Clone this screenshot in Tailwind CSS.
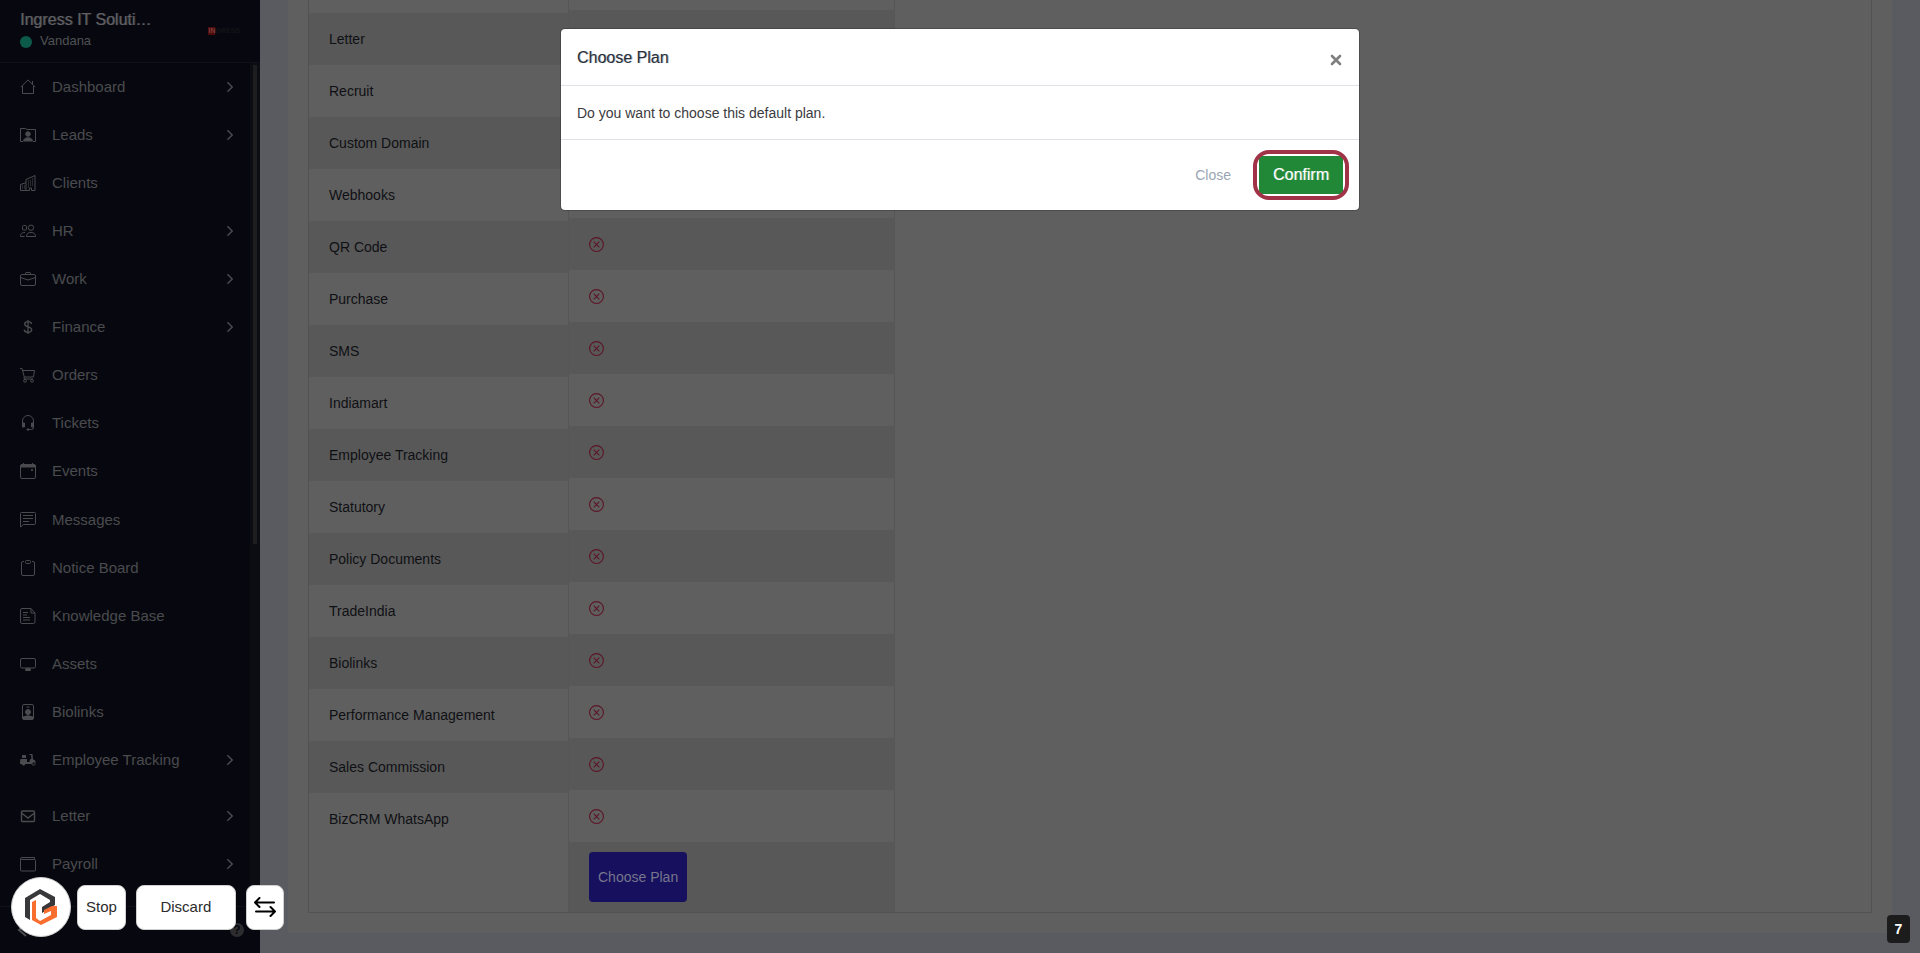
<!doctype html>
<html lang="en">
<head>
  <meta charset="UTF-8">
  <meta name="viewport" content="width=device-width, initial-scale=1.0">
  <title>Choose Plan</title>
  <script src="https://cdn.jsdelivr.net/npm/@tailwindcss/browser@4"></script>
</head>
<body class="relative flex h-screen overflow-hidden bg-[#5a5b60] font-['Liberation_Sans',Arial,sans-serif] text-sm text-[#0f1014]">

  <!-- Shared icons -->
  <svg class="hidden">
    <symbol id="chevron" viewBox="0 0 16 16"><path d="M5 2.5 10.5 8 5 13.5" fill="none" stroke="currentColor" stroke-width="1.7"/></symbol>
    <symbol id="x-circle" viewBox="0 0 16 16"><g fill="none" stroke="currentColor" stroke-width="1.2"><circle cx="8" cy="8" r="7.4"/><path d="m5 5 6 6M11 5l-6 6"/></g></symbol>
  </svg>

  <!-- Sidebar -->
  <aside class="flex w-[260px] shrink-0 flex-col bg-[#07080f] text-[#4a4b4e]">
    <header class="flex h-[63px] shrink-0 items-center justify-between border-b border-[#101118] pl-5 pr-5">
      <div class="pt-px">
        <h1 class="text-base/5 text-[#606063] [text-shadow:1px_0_0_#60606380]">Ingress IT Soluti…</h1>
        <p class="flex h-6 items-center gap-2 text-[13px] text-[#505154]"><span class="size-3 rounded-full bg-[#0c5b4a]"></span>Vandana</p>
      </div>
      <div class="flex text-[7px]/[8px] font-bold text-[#131217]"><span class="bg-[#4f0c0c] text-[#7d3a38]">IN</span>GRESS</div>
    </header>

    <div class="flex min-h-0 flex-1">
      <nav class="flex-1 overflow-hidden text-[15px] [&>a]:flex [&>a]:h-12 [&>a]:items-center [&>a]:gap-4 [&>a]:pl-5 [&>a]:pr-[13px] [&>a>span]:flex-1 [&_svg]:size-4 [&_svg]:shrink-0 [&_svg:last-child:not(:first-child)]:size-[14px]">
        <a href="#"><svg viewBox="0 0 16 16" fill="none" stroke="currentColor"><path d="M2.500 7v7.500h11V7M.8 8 8 .9 15.200 8M12.500 2v3"/></svg><span>Dashboard</span><svg><use href="#chevron"/></svg></a>
        <a href="#"><svg viewBox="0 0 16 16" fill="none" stroke="currentColor"><path d="M3 14.500H.5v-13h5l1.500 1h8.500v12H13"/><circle cx="8" cy="7" r="2.300" fill="currentColor"/><path d="M3.500 14c.5-2.500 2-3.200 4.500-3.200s4 .7 4.500 3.200z" fill="currentColor"/></svg><span>Leads</span><svg><use href="#chevron"/></svg></a>
        <a href="#"><svg viewBox="0 0 16 16" fill="none" stroke="currentColor"><path d="M.5 15.500v-6L6 7.700V4.500l9-4v15h-3.500V13h-2v2.500zM6 7.700v7.800"/><path d="M2 11h1m1 0h1m-3 2h1m1 0h1m3-7h1m1 0h1m1 0h1M8 8h1m1 0h1m1 0h1m-5 2h1m1 0h1m1 0h1m-5 2h1m3-8h1"/></svg><span>Clients</span></a>
        <a href="#"><svg viewBox="0 0 16 16" fill="none" stroke="currentColor"><rect x="2.500" y="2.500" width="4" height="4.500" rx="1"/><circle cx="11" cy="4.700" r="2.700"/><path d="M6.500 13.500c0-3 1.800-4 4.500-4s4.500 1 4.500 4zM4.500 13.500h-4c0-2.700 1-4 4.500-4"/></svg><span>HR</span><svg><use href="#chevron"/></svg></a>
        <a href="#"><svg viewBox="0 0 16 16" fill="none" stroke="currentColor"><rect x=".5" y="3.500" width="15" height="11" rx="1.500"/><path d="M5.500 3.500V2.200q0-.7.7-.7h3.600q.7 0 .7.7v1.300M.5 6.500 8 9l7.500-2.500"/></svg><span>Work</span><svg><use href="#chevron"/></svg></a>
        <a href="#"><svg viewBox="0 0 16 16" fill="none" stroke="currentColor" stroke-width="1.300"><path d="M11.500 5C11.300 3.500 10 2.700 8 2.700S4.700 3.600 4.700 5.200C4.700 8.700 11.700 6.800 11.700 10.600c0 1.700-1.500 2.700-3.700 2.700s-3.600-1-3.800-2.600M8 1v14"/></svg><span>Finance</span><svg><use href="#chevron"/></svg></a>
        <a href="#"><svg viewBox="0 0 16 16" fill="none" stroke="currentColor"><path d="M0 1.500h2l2.300 8.500H13.500M2.700 3.500h11.800l-1 6.500M4.300 10l-.3 2h9"/><circle cx="5" cy="13.800" r="1.400"/><circle cx="12" cy="13.800" r="1.400"/></svg><span>Orders</span></a>
        <a href="#"><svg viewBox="0 0 16 16" fill="none" stroke="currentColor"><path d="M2.500 8V6a5.500 5.500 0 0 1 11 0v6.500q0 2-2 2H9"/><path d="M2.500 8h2v4h-2zM11.500 8h2v4h-2zM7 14h2v1H7z" fill="currentColor"/></svg><span>Tickets</span></a>
        <a href="#"><svg viewBox="0 0 16 16" fill="none" stroke="currentColor"><rect x=".5" y="1.500" width="15" height="14" rx="1.500"/><path d="M1 2h14v2H1z" fill="currentColor"/><path d="M3.500 0v2M12.500 0v2"/><path d="M11.500 6.500h1v1h-1z" fill="currentColor"/></svg><span>Events</span></a>
        <a href="#" class="mt-px"><svg viewBox="0 0 16 16" fill="none" stroke="currentColor"><path d="M.5 15V1.500q0-1 1-1h13q1 0 1 1v10q0 1-1 1H3.500zM3 3.500h10M3 6.500h10M3 9.500h6"/></svg><span>Messages</span></a>
        <a href="#"><svg viewBox="0 0 16 16" fill="none" stroke="currentColor"><path d="M4 1.500H3q-1.500 0-1.500 1.500v11q0 1.500 1.500 1.500h10q1.500 0 1.500-1.500V3q0-1.500-1.500-1.500h-1"/><rect x="5.500" y=".5" width="5" height="3" rx="1"/></svg><span>Notice Board</span></a>
        <a href="#"><svg viewBox="0 0 16 16" fill="none" stroke="currentColor"><path d="M11 .5H2Q.5.500.5 2v12q0 1.500 1.500 1.500h11.500q1.500 0 1.500-1.500V5zM11 .5v4.500h4M3 4.500h5M3 7h4M3 9.500h7M3 12h7"/></svg><span>Knowledge Base</span></a>
        <a href="#"><svg viewBox="0 0 16 16" fill="none" stroke="currentColor"><rect x=".5" y="2.500" width="15" height="9.500" rx="1.500"/><path d="M6 12.500h4l.5 2h-5z" fill="currentColor"/></svg><span>Assets</span></a>
        <a href="#"><svg viewBox="0 0 16 16" fill="none" stroke="currentColor"><rect x="2.500" y=".5" width="11" height="15" rx="1.500"/><path d="M6.500 3h3"/><circle cx="8" cy="8" r="2.500" fill="currentColor"/><path d="M3 15v-2q5-2.500 10 0v2z" fill="currentColor"/></svg><span>Biolinks</span></a>
        <a href="#"><svg viewBox="0 0 16 16" fill="currentColor"><path d="M2 3h4v3H2zM.5 7h6.500v3h2.500c0-2 .7-3 2-3.500L11 3H9.500V2h3l.5 5.500c1.500.3 2.200 1 2.700 2.200l-2 .6-2 1.700H0C0 10 0 8.500.5 7z"/><circle cx="3.500" cy="11.500" r="2"/><circle cx="13.500" cy="11.500" r="1.700" fill="none" stroke="currentColor"/></svg><span>Employee Tracking</span><svg><use href="#chevron"/></svg></a>
        <a href="#" class="mt-2"><svg viewBox="0 0 16 16" fill="none" stroke="currentColor" stroke-width="1.400"><rect x="1.500" y="3" width="13" height="10.500" rx="1"/><path d="m1.500 5 6.500 5 6.500-5"/></svg><span>Letter</span><svg><use href="#chevron"/></svg></a>
        <a href="#"><svg viewBox="0 0 16 16" fill="none" stroke="currentColor"><rect x=".5" y="3.500" width="15" height="11.500" rx="1"/><path d="M.5 4V3q0-1.500 1.500-1.500h12.500V3.500"/></svg><span>Payroll</span><svg><use href="#chevron"/></svg></a>
      </nav>
      <div class="flex w-[10px] justify-center bg-[#0c0d12] pt-[2px]"><div class="h-[57%] w-1 bg-[#1d1d1f]"></div></div>
    </div>

    <footer class="flex h-[47px] shrink-0 items-center justify-between border-t border-[#101118] px-4">
      <svg class="size-4" viewBox="0 0 16 16" fill="none" stroke="currentColor" stroke-width="2"><path d="M10 2 3 8l7 6"/></svg>
      <span class="flex size-[14px] items-center justify-center rounded-full bg-[#2d2d30] text-xs font-bold text-[#07080f]">?</span>
    </footer>
  </aside>

  <!-- Package comparison -->
  <main class="min-w-0 flex-1 px-7">
    <div class="bg-[#5f5f5f] px-5 pb-5">
      <div class="flex border-x border-b border-[#525252]">
        <ul class="w-[260px] shrink-0 border-r border-[#565656] [&>li]:flex [&>li]:h-[52px] [&>li]:items-center [&>li]:px-5 [&>li:nth-child(even)]:bg-[#585858] [&>li:first-child]:h-[13px]">
          <li></li>
          <li>Letter</li>
          <li>Recruit</li>
          <li>Custom Domain</li>
          <li>Webhooks</li>
          <li>QR Code</li>
          <li>Purchase</li>
          <li>SMS</li>
          <li>Indiamart</li>
          <li>Employee Tracking</li>
          <li>Statutory</li>
          <li>Policy Documents</li>
          <li>TradeIndia</li>
          <li>Biolinks</li>
          <li>Performance Management</li>
          <li>Sales Commission</li>
          <li>BizCRM WhatsApp</li>
        </ul>
        <ul class="w-[326px] shrink-0 border-r border-[#565656] text-[#5c1526] [&>li]:flex [&>li]:h-[52px] [&>li]:items-center [&>li]:px-5 [&>li:nth-child(even)]:bg-[#585858] [&>li:first-child]:h-[10px] [&>li:last-child]:h-[70px] [&_svg]:size-[15px]">
          <li></li>
          <li><svg><use href="#x-circle"/></svg></li>
          <li><svg><use href="#x-circle"/></svg></li>
          <li><svg><use href="#x-circle"/></svg></li>
          <li><svg><use href="#x-circle"/></svg></li>
          <li><svg><use href="#x-circle"/></svg></li>
          <li><svg><use href="#x-circle"/></svg></li>
          <li><svg><use href="#x-circle"/></svg></li>
          <li><svg><use href="#x-circle"/></svg></li>
          <li><svg><use href="#x-circle"/></svg></li>
          <li><svg><use href="#x-circle"/></svg></li>
          <li><svg><use href="#x-circle"/></svg></li>
          <li><svg><use href="#x-circle"/></svg></li>
          <li><svg><use href="#x-circle"/></svg></li>
          <li><svg><use href="#x-circle"/></svg></li>
          <li><svg><use href="#x-circle"/></svg></li>
          <li><svg><use href="#x-circle"/></svg></li>
          <li><button class="h-[50px] rounded bg-[#16105e] px-[9px] text-[#77768c]">Choose Plan</button></li>
        </ul>
      </div>
    </div>
  </main>

  <!-- Choose plan modal -->
  <div role="dialog" aria-labelledby="modal-title" class="absolute inset-x-0 top-7 mx-auto w-full max-w-[800px] rounded-[5px] border border-black/20 bg-white bg-clip-padding text-[#3a3b41]">
    <div class="flex h-[57px] items-center justify-between border-b border-[#dee2e6] pl-4 pr-[17px] pt-[2px]">
      <h2 id="modal-title" class="text-base text-[#28313c] [text-shadow:1px_0_0_#28313c60]">Choose Plan</h2>
      <button aria-label="Close" class="text-[#7f7f7f]"><svg class="mt-1 size-3" viewBox="0 0 12 12"><path d="m2 2 8 8M10 2l-8 8" stroke="currentColor" stroke-width="2.600" stroke-linecap="round"/></svg></button>
    </div>
    <p class="flex h-[53px] items-center px-4">Do you want to choose this default plan.</p>
    <div class="flex h-[71px] items-center justify-end gap-7 border-t border-[#dee2e6] px-4">
      <button class="text-[#99a5b5]">Close</button>
      <button class="relative h-[38px] rounded-xs bg-[#218838] px-[14px] text-base text-white [text-shadow:1px_0_0_#ffffff60]">Confirm<span class="absolute -inset-[6px] rounded-2xl border-4 border-[#a03348]"></span></button>
    </div>
  </div>

  <!-- Recorder controls -->
  <div class="absolute bottom-4 left-[11px] flex items-center text-[15px] text-[#2b2b2b]">
    <div class="mr-[6px] flex size-[60px] items-center justify-center rounded-full border border-[#d0d0d0] bg-white">
      <svg class="h-9 w-8" viewBox="0 0 32 36"><path d="M0 28V9L15 0l15 8v8l-13 8v-6l8-5v-2L15 5 5 11v20z" fill="#38383a"/><path d="m7 13 4-2v18l4 3 11-6v-4l-7 3v-4l8-4h5v11L16 36l-9-5z" fill="#f96d2f"/></svg>
    </div>
    <button class="mr-[10px] h-[45px] rounded-lg border border-[#d0d0d0] bg-white px-2">Stop</button>
    <button class="mr-[10px] h-[45px] w-[100px] rounded-lg border border-[#d0d0d0] bg-white">Discard</button>
    <button aria-label="Swap" class="flex h-[45px] w-[38px] items-center justify-center rounded-lg border border-[#d0d0d0] bg-white text-black">
      <svg class="h-5 w-[22px]" viewBox="0 0 22 20" fill="none" stroke="currentColor" stroke-width="2" stroke-linecap="round" stroke-linejoin="round"><path d="M20 5.500H1L5.500 1M1 5.500 5.500 10M2 14.500h19L16.500 10M21 14.500 16.500 19"/></svg>
    </button>
  </div>

  <!-- Step counter -->
  <div class="absolute bottom-[10px] right-[10px] flex h-7 w-[23px] items-center justify-center rounded bg-[#1c1c1c] text-sm font-bold text-white">7</div>
</body>
</html>
